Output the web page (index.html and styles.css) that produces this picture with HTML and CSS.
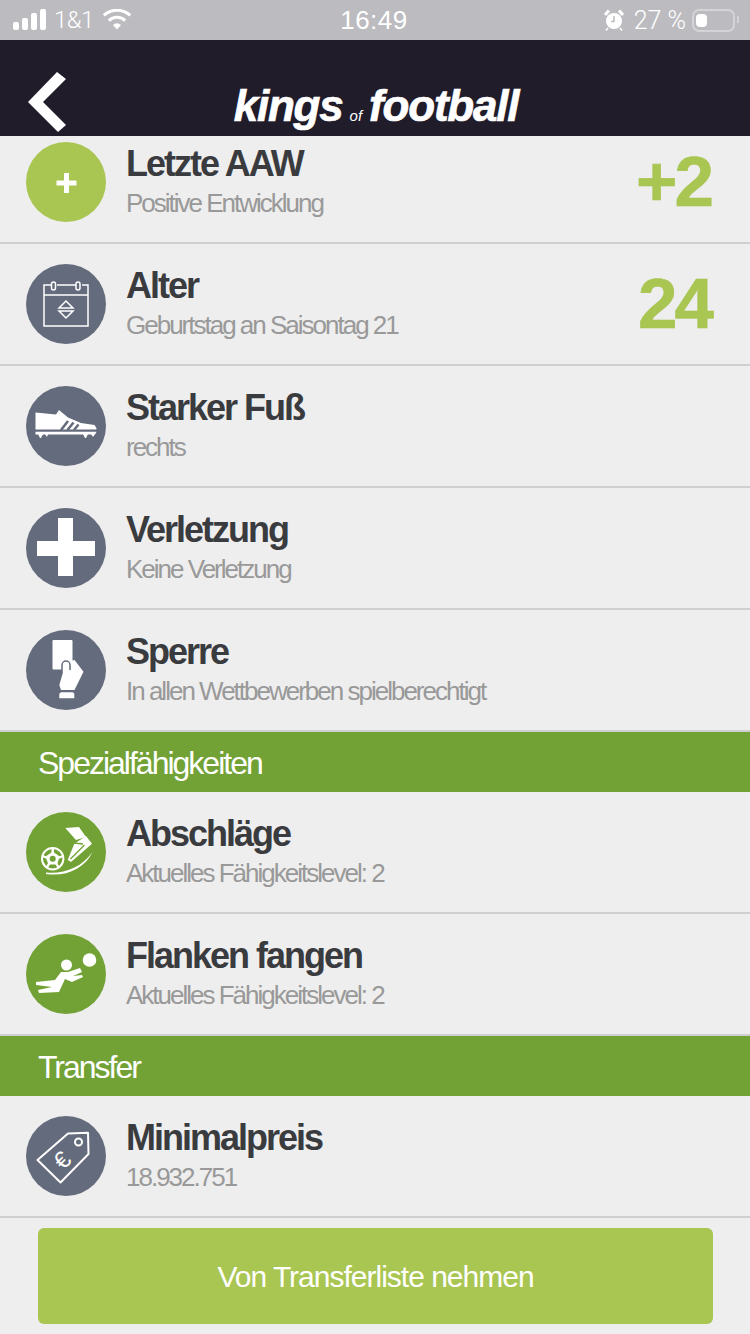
FILE: index.html
```html
<!DOCTYPE html>
<html lang="de">
<head>
  <meta charset="UTF-8" />
  <meta name="viewport" content="width=device-width, initial-scale=1" />
  <title>Kings of Football</title>
  <link rel="stylesheet" href="styles.css">
</head>
<body>
  <div class="status">
    <div class="status-side">
      <span class="signal"><i class="s1"></i><i class="s2"></i><i class="s3"></i><i class="s4"></i></span>
      <span class="carrier">1&amp;1</span>
      <svg class="wifi" viewBox="0 0 30 22" width="30" height="22">
        <path d="M15 20.500l-4-4.600a6 6 0 0 1 8 0z" fill="#fff"/>
        <path d="M6.800 11.600a12 12 0 0 1 16.400 0" fill="none" stroke="#fff" stroke-width="3"/>
        <path d="M1.800 6.400a19.500 19.500 0 0 1 26.400 0" fill="none" stroke="#fff" stroke-width="3"/>
      </svg>
    </div>
    <div class="clock">16:49</div>
    <div class="status-side status-right">
      <svg class="alarm" viewBox="0 0 20 22" width="20" height="22">
        <circle cx="10" cy="12" r="8" fill="#fff"/>
        <path d="M10 7v5.500h-3" fill="none" stroke="#bcbbc0" stroke-width="1.500"/>
        <path d="M1 6l4-4.500M19 6l-4-4.500" stroke="#fff" stroke-width="3"/>
        <path d="M4 19l-2 2.500M16 19l2 2.500" stroke="#fff" stroke-width="1.500"/>
      </svg>
      <span class="percent">27 %</span>
      <span class="battery"><i></i></span>
    </div>
  </div>

  <header class="topbar">
    <svg class="back" viewBox="0 0 40 62" width="40" height="62">
      <polygon points="29,0 38,7 15,30 38,53 30,60 0,30" fill="#fff"/>
    </svg>
    <div class="logo">kings<small>of</small>football</div>
    <span></span>
  </header>

  <main class="list">
    <section class="row row-first">
      <span class="badge badge-lime">
        <svg viewBox="0 0 80 80"><path d="M40.500 31v20M30.500 41h20" stroke="#fff" stroke-width="5"/></svg>
      </span>
      <div class="info">
        <h2>Letzte AAW</h2>
        <p>Positive Entwicklung</p>
      </div>
      <div class="value">+2</div>
    </section>

    <section class="row">
      <span class="badge">
        <svg viewBox="0 0 80 80" fill="none" stroke="#fff" stroke-width="1.500">
          <path d="M25 21h-7v41h44V21h-6M31 21h19"/>
          <path d="M18 31h44"/>
          <rect x="25.500" y="18" width="4" height="8" rx="2"/>
          <rect x="50" y="18" width="4" height="8" rx="2"/>
          <path d="M33 44l7-7 7 7zM33 47h14l-7 7z"/>
        </svg>
      </span>
      <div class="info">
        <h2>Alter</h2>
        <p>Geburtstag an Saisontag 21</p>
      </div>
      <div class="value">24</div>
    </section>

    <section class="row">
      <span class="badge">
        <svg viewBox="0 0 80 80">
          <path d="M9.500 26.500L30 28.500l3-4.500 9 7.500 13 5.500 13.500 2 2.200 3.500-.7 1H9.500z" fill="#fff"/>
          <path d="M35 44l7-9M41.500 44l6-7.500M48 44l4.500-5.500" stroke="#646b7c" stroke-width="2.500"/>
          <path d="M9.500 45.700h61l-1.500 2.800H9.500z" fill="#fff"/>
          <path d="M12 48h5l-2 4h-1zM19 48h3l-1 3zM57 48h5l-2 4h-1zM65 48h4l-2 3z" fill="#fff"/>
        </svg>
      </span>
      <div class="info">
        <h2>Starker Fuß</h2>
        <p>rechts</p>
      </div>
    </section>

    <section class="row">
      <span class="badge">
        <svg viewBox="0 0 80 80"><path d="M32 10h15v23h22v15H47v20H32V48H11V33h21z" fill="#fff"/></svg>
      </span>
      <div class="info">
        <h2>Verletzung</h2>
        <p>Keine Verletzung</p>
      </div>
    </section>

    <section class="row">
      <span class="badge">
        <svg viewBox="0 0 80 80" fill="#fff">
          <rect x="26.500" y="10" width="20" height="29.500" rx="1"/>
          <path d="M36 33l12.500-3 9 11.700-9 18.300H35l-1.700-5 3.500-12z"/>
          <path d="M36 43v-8a4 4 0 0 1 8 0v5" stroke="#646b7c" stroke-width="1.500"/>
          <path d="M35 62.300h12l1.300 1.500v4.500H33.300v-4.500z"/>
        </svg>
      </span>
      <div class="info">
        <h2>Sperre</h2>
        <p>In allen Wettbewerben spielberechtigt</p>
      </div>
    </section>

    <h3 class="section">Spezialfähigkeiten</h3>

    <section class="row">
      <span class="badge badge-green">
        <svg viewBox="0 0 80 80">
          <circle cx="26.700" cy="46.700" r="10.700" fill="none" stroke="#fff" stroke-width="2"/>
          <path d="M26.700 39.500l7 5-2.600 8h-8.800l-2.600-8z" fill="#fff"/>
          <path d="M26.700 36v5M37 44l-5 2M33 56l-3-5M20.500 56l3-5M16.500 44l5 2" stroke="#fff" stroke-width="2.400"/>
          <circle cx="26.700" cy="46.700" r="3" fill="#72a236"/>
          <path d="M39.300 16L53 15l7 10-10 3z" fill="#fff"/>
          <path d="M60 24l6 7.700-21 18.300-3.300-2 6.600-16.300z" fill="#fff"/>
          <path d="M48 31l9 1M44.500 47l14-14" stroke="#72a236" stroke-width="1.300" fill="none"/>
          <path d="M20 60.500c17 2 36-5 46.500-20.500-8 17-27 25-46.500 22z" fill="#fff"/>
        </svg>
      </span>
      <div class="info">
        <h2>Abschläge</h2>
        <p>Aktuelles Fähigkeitslevel: 2</p>
      </div>
    </section>

    <section class="row">
      <span class="badge badge-green">
        <svg viewBox="0 0 80 80" fill="#fff">
          <circle cx="63.500" cy="26" r="6.800"/>
          <circle cx="40.500" cy="31" r="5.500"/>
          <path d="M10 48l19-2 6-8h7l12-4 2 4-9 4 9-1 1 2-11 5-7-3-6 13-20 1-1-3 14-3-16-2z"/>
        </svg>
      </span>
      <div class="info">
        <h2>Flanken fangen</h2>
        <p>Aktuelles Fähigkeitslevel: 2</p>
      </div>
    </section>

    <h3 class="section">Transfer</h3>

    <section class="row">
      <span class="badge">
        <svg viewBox="0 0 80 80">
          <path d="M11.500 44L42 17.500l20-.8.500 21.300-28 28.500z" fill="none" stroke="#fff" stroke-width="2" stroke-linejoin="round"/>
          <circle cx="52.500" cy="26" r="3.500" fill="none" stroke="#fff" stroke-width="2"/>
          <text class="euro" x="0" y="0" transform="translate(42 50) rotate(-45)">€</text>
        </svg>
      </span>
      <div class="info">
        <h2>Minimalpreis</h2>
        <p>18.932.751</p>
      </div>
    </section>
  </main>

  <footer class="actions">
    <button type="button">Von Transferliste nehmen</button>
  </footer>
</body>
</html>
```

FILE: styles.css
```css
* {
  box-sizing: border-box;
}
body {
  margin: 0;
  width: 750px;
  height: 1334px;
  display: flex;
  flex-direction: column;
  overflow: hidden;
  background-color: #eeeeee;
  font-family: "Liberation Sans", Arial, sans-serif;
}

/* status bar */
.status {
  height: 40px;
  flex: none;
  display: grid;
  grid-template-columns: 1fr auto 1fr;
  align-items: center;
  padding: 0 15px 0 13px;
  background-color: #bcbbc0;
  color: #fff;
}
.status-side {
  display: flex;
  align-items: center;
}
.status-right {
  justify-content: flex-end;
}
.signal {
  display: flex;
  align-items: flex-end;
  gap: 3px;
  height: 21px;
  margin-bottom: 1px;
}
.signal i {
  display: block;
  width: 6px;
  background-color: #fff;
  border-radius: 2px;
}
.signal .s1 { height: 8px; }
.signal .s2 { height: 12px; }
.signal .s3 { height: 17px; }
.signal .s4 { height: 21px; }
.carrier {
  margin-left: 8px;
  font-family: Roboto, "Liberation Sans", sans-serif;
  font-size: 24px;
  font-weight: 300;
  letter-spacing: -0.5px;
}
.wifi {
  margin-left: 8px;
}
.clock {
  font-size: 26px;
  letter-spacing: 0.5px;
}
.percent {
  margin-left: 10px;
  font-family: Roboto, "Liberation Sans", sans-serif;
  font-size: 25px;
  font-weight: 300;
}
.battery {
  position: relative;
  width: 43px;
  height: 23px;
  margin-left: 6px;
  padding: 3px 2px;
  border: 2px solid #d4d4d6;
  border-radius: 7px;
}
.battery i {
  display: block;
  width: 11px;
  height: 100%;
  background-color: #fff;
  border-radius: 4px;
}
.battery::after {
  content: "";
  position: absolute;
  top: 5px;
  right: -6px;
  width: 2px;
  height: 7px;
  background-color: #d4d4d6;
}

/* header */
.topbar {
  height: 96px;
  flex: none;
  display: grid;
  grid-template-columns: 1fr auto 1fr;
  padding-left: 28px;
  background-color: #211c2a;
}
.back {
  margin-top: 32px;
}
.logo {
  margin-top: 41px;
  color: #fff;
  font-size: 44px;
  font-weight: bold;
  font-style: italic;
  line-height: 50px;
  letter-spacing: -1.2px;
  -webkit-text-stroke: 0.7px #fff;
  transform: translateX(-13px);
}
.logo small {
  margin: 0 7px 0 7px;
  font-size: 15px;
  font-weight: normal;
  letter-spacing: 0;
  -webkit-text-stroke: 0;
}

/* list */
.list {
  flex: 1;
  overflow: hidden;
}
.row {
  display: flex;
  align-items: center;
  height: 122px;
  padding: 20px 39px 20px 26px;
  border-bottom: 2px solid #cfcfcf;
}
.row-first {
  height: 108px;
  padding-top: 6px;
}
.badge {
  flex: none;
  width: 80px;
  height: 80px;
  margin-right: 20px;
  border-radius: 50%;
  background-color: #646b7c;
}
.badge svg {
  display: block;
  width: 80px;
  height: 80px;
}
.badge-lime {
  background-color: #a9c552;
}
.badge-green {
  background-color: #72a236;
}
.info {
  flex: 1;
}
.info h2 {
  margin: 0;
  color: #3a3b3e;
  font-size: 36px;
  font-weight: bold;
  line-height: 40px;
  letter-spacing: -2px;
}
.info p {
  margin: 1px 0 -1px;
  color: #999999;
  font-size: 26px;
  line-height: 36px;
  letter-spacing: -2px;
}
.value {
  color: #a9c552;
  font-size: 71px;
  font-weight: bold;
  line-height: 72px;
  letter-spacing: -3px;
  -webkit-text-stroke: 0.6px #a9c552;
}
.section {
  height: 60px;
  margin: 0;
  padding-left: 38px;
  background-color: #72a236;
  color: #fff;
  font-size: 32px;
  font-weight: normal;
  line-height: 62px;
  letter-spacing: -2px;
}
.euro {
  fill: #fff;
  font-size: 24px;
  text-anchor: middle;
}

/* bottom button */
.actions {
  flex: none;
  height: 116px;
  padding: 10px 37px 10px 38px;
}
.actions button {
  width: 100%;
  height: 96px;
  padding-top: 2px;
  border: none;
  border-radius: 6px;
  background-color: #a9c552;
  color: #fff;
  font-family: inherit;
  font-size: 30px;
  letter-spacing: -1px;
  cursor: pointer;
}
```
